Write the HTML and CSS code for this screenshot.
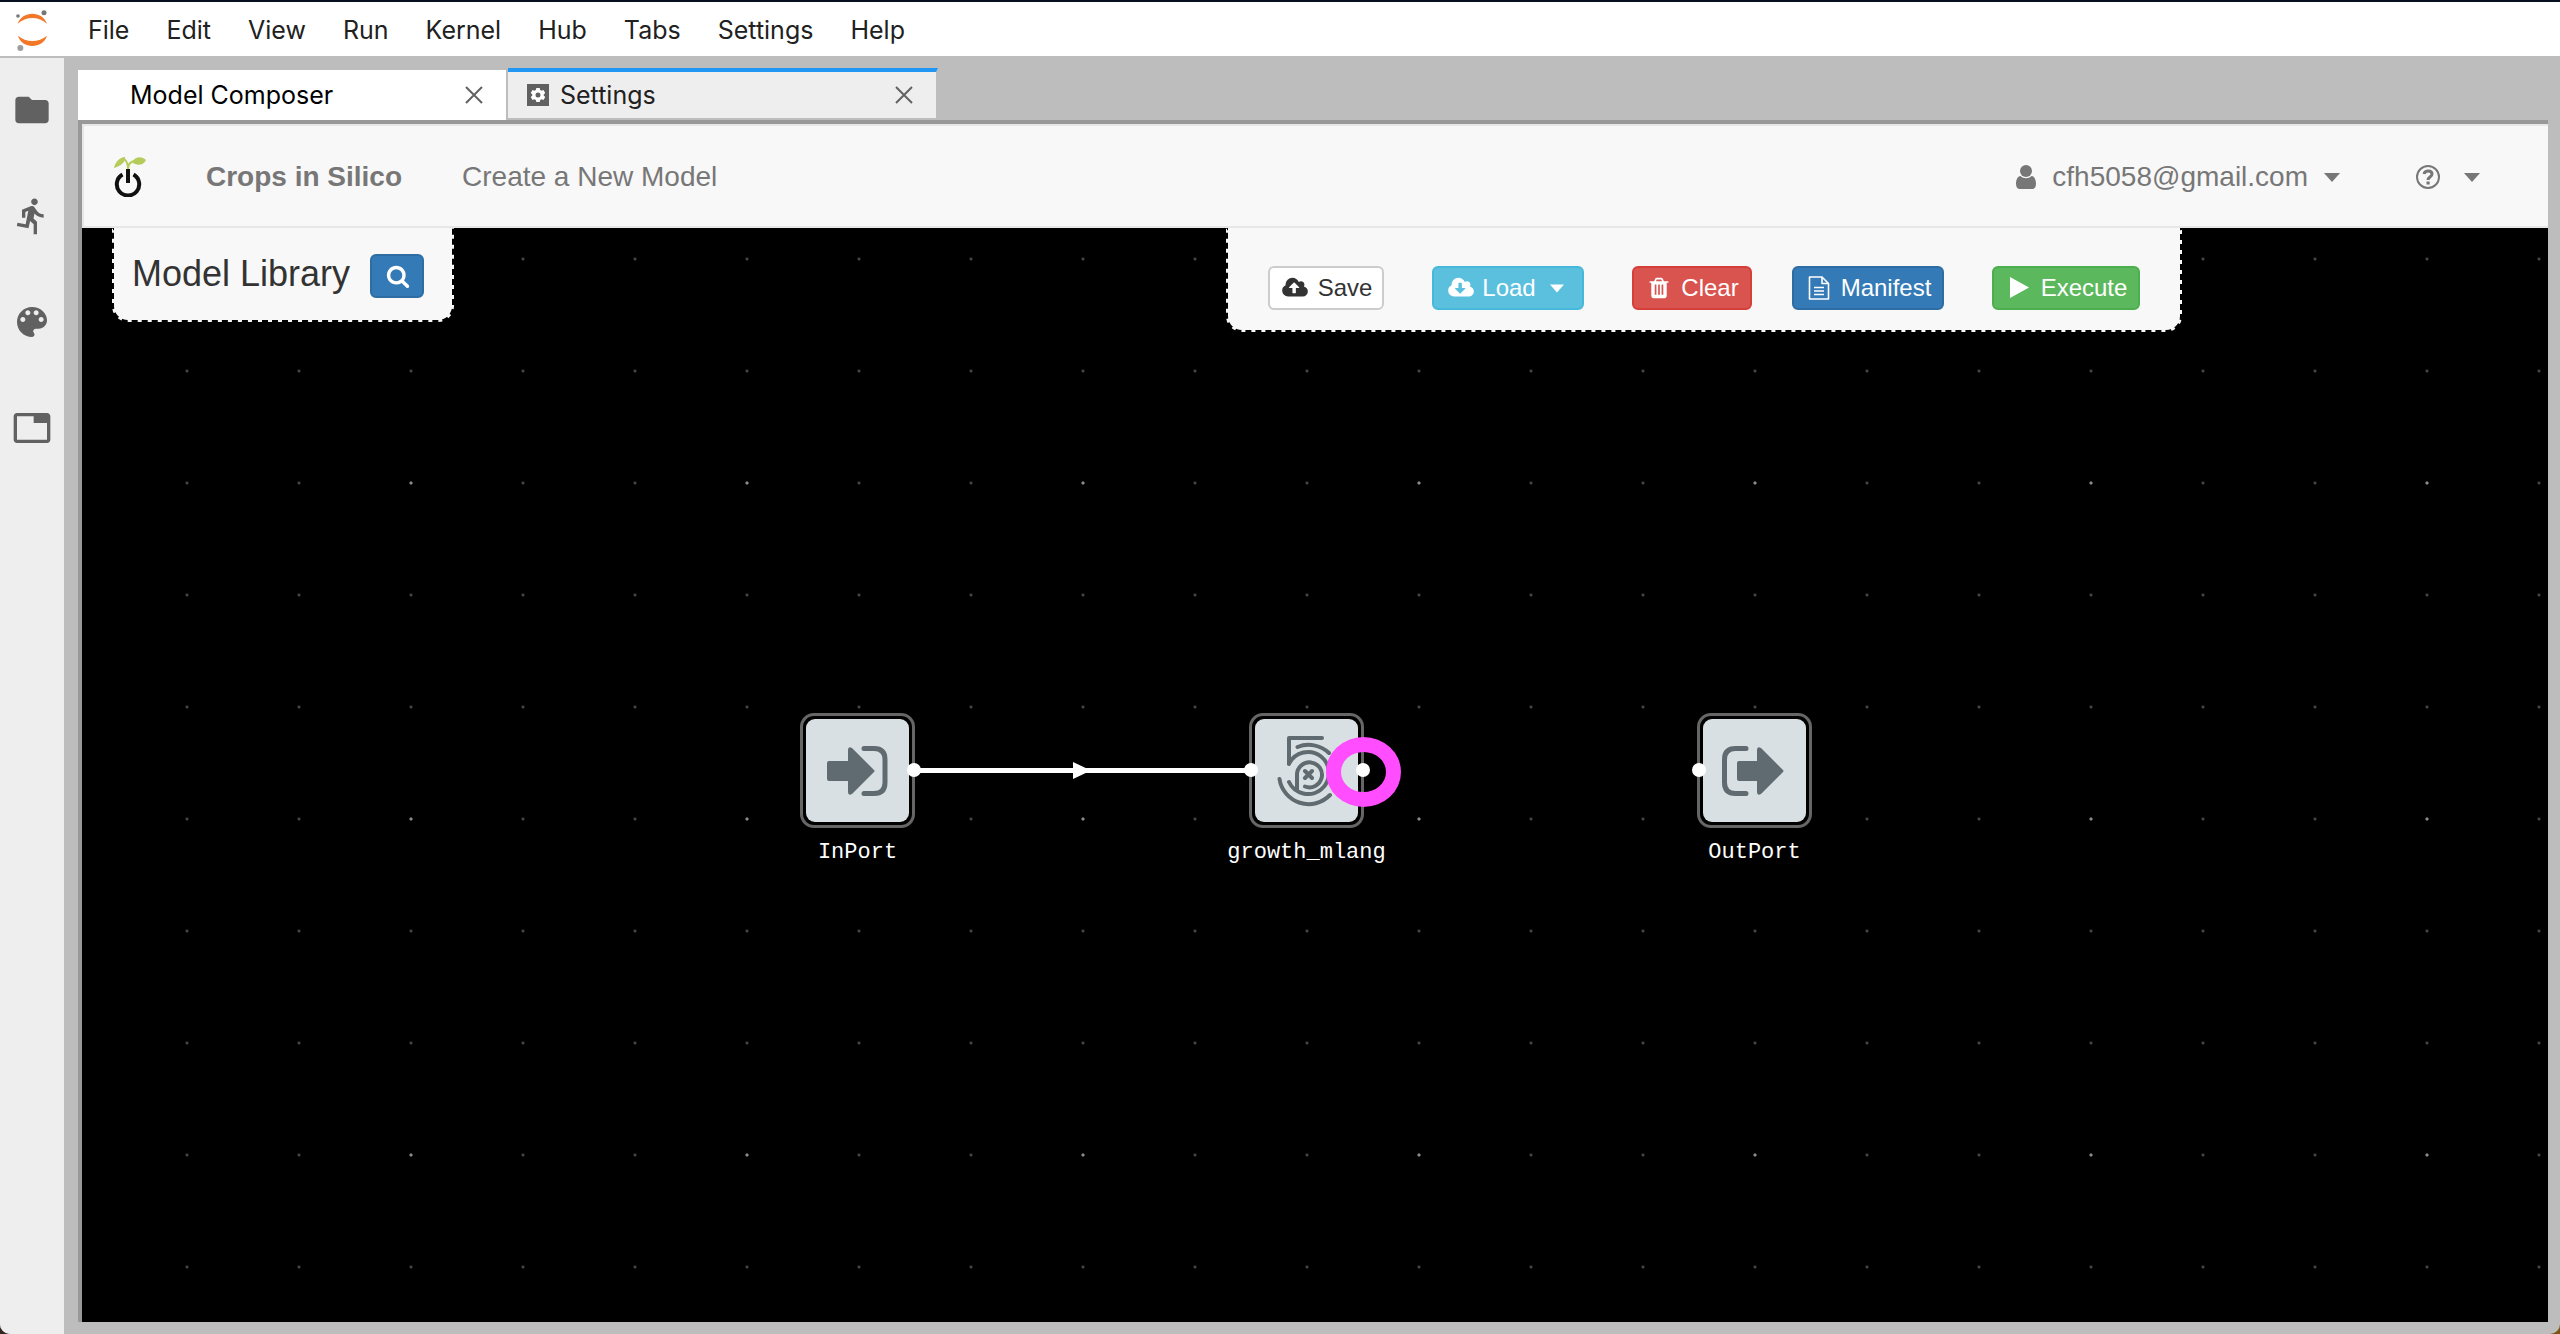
FILE: index.html
```html
<!DOCTYPE html>
<html lang="en">
<head>
<meta charset="utf-8">
<title>Model Composer</title>
<link rel="stylesheet" href="styles.css">
</head>
<body>
<div class="app">
  <header class="menubar">
    <svg class="jupyter" viewBox="0 0 192 162" aria-hidden="true">
      <path fill="#f37726" d="M53 65C66 25 128 25 141 65C116 42 78 42 53 65zM54 101C66 142 128 142 141 101C116 122 78 122 54 101z"/>
      <circle cx="54" cy="42" r="5.5" fill="#767677"/><circle cx="132" cy="32" r="7.5" fill="#767677"/><circle cx="61" cy="138" r="9" fill="#9e9e9e"/>
    </svg>
    <nav class="menus">
      <button>File</button><button>Edit</button><button>View</button><button>Run</button><button>Kernel</button><button>Hub</button><button>Tabs</button><button>Settings</button><button>Help</button>
    </nav>
  </header>
  <div class="workspace">
    <aside class="sidebar">
      <button aria-label="Files"><svg viewBox="0 0 24 24"><path d="M10 4H4c-1.100 0-1.990.9-1.990 2L2 18c0 1.100.9 2 2 2h16c1.100 0 2-.9 2-2V8c0-1.100-.9-2-2-2h-8l-2-2z"/></svg></button>
      <button aria-label="Running"><svg viewBox="0 0 24 24"><path d="M13.490 5.480c1.100 0 2-.9 2-2s-.9-2-2-2-2 .9-2 2 .9 2 2 2zm-3.600 13.900l1-4.400 2.100 2v6h2v-7.500l-2.100-2 .6-3c1.300 1.500 3.300 2.500 5.500 2.500v-2c-1.900 0-3.500-1-4.300-2.400l-1-1.600c-.4-.6-1-1-1.700-1-.3 0-.5.1-.8.1l-5.200 2.200v4.700h2v-3.400l1.800-.7-1.600 8.100-4.900-1-.4 2 7 1.400z"/></svg></button>
      <button aria-label="Commands"><svg viewBox="0 0 24 24"><path d="M12 3c-4.970 0-9 4.030-9 9s4.030 9 9 9c.83 0 1.500-.67 1.500-1.500 0-.39-.15-.74-.39-1.010-.23-.26-.38-.61-.38-.99 0-.83.67-1.500 1.500-1.500H16c2.760 0 5-2.240 5-5 0-4.420-4.030-8-9-8zm-5.500 9c-.83 0-1.500-.67-1.500-1.500S5.670 9 6.500 9 8 9.670 8 10.500 7.330 12 6.500 12zm3-4C8.670 8 8 7.330 8 6.500S8.670 5 9.500 5s1.500.67 1.500 1.500S10.330 8 9.500 8zm5 0c-.83 0-1.500-.67-1.500-1.500S13.670 5 14.500 5s1.500.67 1.500 1.500S15.330 8 14.500 8zm3 4c-.83 0-1.500-.67-1.500-1.500S16.670 9 17.500 9s1.500.67 1.500 1.500-.67 1.500-1.500 1.500z"/></svg></button>
      <button aria-label="Open tabs"><svg viewBox="0 0 24 24"><path d="M21 3H3c-1.100 0-2 .9-2 2v14c0 1.100.9 2 2 2h18c1.100 0 2-.9 2-2V5c0-1.100-.9-2-2-2zm0 16H3V5h10v4h8v10z"/></svg></button>
    </aside>
    <main class="dock">
      <div class="tabs">
        <div class="tab tab-front">
          <span class="tab-icon"></span><span class="tab-label">Model Composer</span>
          <button class="close" aria-label="Close Model Composer"><svg viewBox="0 0 18 18"><path d="M1 1l16 16M17 1L1 17"/></svg></button>
        </div>
        <div class="tab tab-current">
          <svg class="tab-icon" viewBox="0 0 24 24"><path fill="#616161" d="M1 1h22v22H1z"/><path fill="#fff" fill-rule="evenodd" d="M10.300 5h3.400l.5 2 1.300.7 2-.6 1.700 2.900-1.500 1.400v1.200l1.500 1.400-1.700 2.900-2-.6-1.300.7-.5 2h-3.400l-.5-2-1.300-.7-2 .6L4.800 14l1.500-1.400v-1.200L4.800 10l1.700-2.900 2 .6L9.800 7zM12 9.500a2.500 2.500 0 1 0 0 5 2.500 2.500 0 0 0 0-5z"/></svg>
          <span class="tab-label">Settings</span>
          <button class="close" aria-label="Close Settings"><svg viewBox="0 0 18 18"><path d="M1 1l16 16M17 1L1 17"/></svg></button>
        </div>
      </div>
      <section class="panel">
        <nav class="navbar">
          <a class="logo" href="#" aria-label="Home"><svg viewBox="0 0 32 40">
            <path fill="#b5cc5a" d="M0 11C1 5 6 0 11 0c1 5-4 9-11 11zM18 5c3-6 10-6 14-2-3 6-10 6-14 2z"/>
            <path fill="none" stroke="#b5cc5a" stroke-width="2" d="M10 2c3 2 4 5 4 10 0-4 2-7 6-8"/>
            <path fill="none" stroke="#111" stroke-width="4" d="M8.500 17.500a11.200 11.200 0 1 0 11 0M14 12v14"/>
          </svg></a>
          <a class="brand" href="#">Crops in Silico</a>
          <a class="link" href="#">Create a New Model</a>
          <button class="account">
            <svg class="user" viewBox="0 0 20 24"><circle cx="10" cy="6" r="6"/><path d="M4.500 11c3 3 8 3 11 0 3 0 4.500 4 4.500 8 0 3-1.500 5-4 5H4c-2.500 0-4-2-4-5 0-4 1.500-8 4.500-8z"/></svg>
            cfh5058@gmail.com
            <svg class="caret" viewBox="0 0 16 9"><path d="M0 0h16L8 9z"/></svg>
          </button>
          <button class="help" aria-label="Help">
            <svg class="question" viewBox="0 0 24 24"><circle cx="12" cy="12" r="11" fill="none" stroke="currentColor" stroke-width="2"/><path fill="none" stroke="currentColor" stroke-width="3" d="M8 9c1-4 8-4 8 0 0 3-4 3-4 6"/><path d="M10.500 16.500h3.200v3h-3.200z"/></svg>
            <svg class="caret" viewBox="0 0 16 9"><path d="M0 0h16L8 9z"/></svg>
          </button>
        </nav>
        <div class="canvas">
          <div class="library">
            <h3>Model Library</h3>
            <button class="btn primary search" aria-label="Search models"><svg class="icon" viewBox="0 0 1792 1792"><path d="M1216 832q0-185-131.500-316.500t-316.500-131.500-316.500 131.500-131.500 316.500 131.500 316.500 316.500 131.500 316.500-131.500 131.500-316.500zm512 832q0 52-38 90t-90 38q-54 0-90-38l-343-342q-179 124-399 124-143 0-273.500-55.500t-225-150-150-225-55.500-273.500 55.500-273.500 150-225 225-150 273.500-55.500 273.500 55.500 225 150 150 225 55.500 273.500q0 220-124 399l343 343q37 37 37 90z"/></svg></button>
          </div>
          <div class="toolbar">
            <button class="btn default save"><svg class="icon cloud" viewBox="-64 0 1920 1792"><path d="M1216 864q0-14-9-23l-352-352q-9-9-23-9t-23 9l-351 351q-10 12-10 24 0 14 9 23t23 9h224v352q0 13 9.500 22.500t22.500 9.500h192q13 0 22.500-9.500t9.500-22.500v-352h224q13 0 22.500-9.500t9.500-22.500zm640 288q0 159-112.500 271.500t-271.500 112.500h-1088q-185 0-316.500-131.500t-131.500-316.500q0-130 70-240t188-165q-2-30-2-43 0-212 150-362t362-150q156 0 285.500 87t188.500 231q71-62 166-62 106 0 181 75t75 181q0 76-41 138 130 31 213.500 135.500t83.500 238.500z"/></svg>Save</button>
            <button class="btn info load"><svg class="icon cloud" viewBox="-64 0 1920 1792"><path d="M1216 928q0-14-9-23t-23-9h-224v-352q0-13-9.500-22.500t-22.500-9.500h-192q-13 0-22.500 9.500t-9.500 22.500v352h-224q-13 0-22.500 9.500t-9.500 22.500q0 14 9 23l352 352q9 9 23 9t23-9l351-351q10-12 10-24zm640 224q0 159-112.500 271.500t-271.500 112.500h-1088q-185 0-316.500-131.500t-131.500-316.500q0-130 70-240t188-165q-2-30-2-43 0-212 150-362t362-150q156 0 285.500 87t188.500 231q71-62 166-62 106 0 181 75t75 181q0 76-41 138 130 31 213.500 135.500t83.500 238.500z"/></svg>Load<svg class="caret" viewBox="0 0 16 9"><path d="M0 0h16L8 9z"/></svg></button>
            <button class="btn danger clear"><svg class="icon" viewBox="0 0 1792 1792"><path d="M704 1376v-704q0-14-9-23t-23-9h-64q-14 0-23 9t-9 23v704q0 14 9 23t23 9h64q14 0 23-9t9-23zm256 0v-704q0-14-9-23t-23-9h-64q-14 0-23 9t-9 23v704q0 14 9 23t23 9h64q14 0 23-9t9-23zm256 0v-704q0-14-9-23t-23-9h-64q-14 0-23 9t-9 23v704q0 14 9 23t23 9h64q14 0 23-9t9-23zm-544-992h448l-48-117q-7-9-17-11h-317q-10 2-17 11zm928 32v64q0 14-9 23t-23 9h-96v948q0 83-47 143.500t-113 60.500h-832q-66 0-113-58.500t-47-141.500v-952h-96q-14 0-23-9t-9-23v-64q0-14 9-23t23-9h309l70-167q15-37 54-63t79-26h320q40 0 79 26t54 63l70 167h309q14 0 23 9t9 23z"/></svg>Clear</button>
            <button class="btn primary manifest"><svg class="icon" viewBox="0 0 24 24"><path fill="none" stroke="currentColor" stroke-width="1.600" stroke-linejoin="round" d="M2.500 1H15l6.500 6.500V23h-19zM15 1v6.500h6.500M7 11.500h10M7 15h10M7 18.500h10"/></svg>Manifest</button>
            <button class="btn success execute"><svg class="icon" viewBox="0 0 24 24"><path d="M3 1v21l19-10.500z"/></svg>Execute</button>
          </div>
          <svg class="wires" aria-hidden="true"><path d="M832 542.500h337" stroke="#fff" stroke-width="5"/><path d="M991 534v17l18-8.500z" fill="#fff"/></svg>
          <div class="node inport">
            <div class="box"><svg viewBox="6 6 103 103"><path d="M29 48h19V37q0-4 4-2l22 22q1 1 0 2L52 81q-4 2-4-2V68H29q-2 0-2-2V50q0-2 2-2z"/><path class="line" d="M64 35.500h10q11 0 11 11v23q0 11-11 11H64"/></svg></div>
            <span class="name">InPort</span><i class="port out"></i>
          </div>
          <div class="node growth">
            <div class="box"><svg viewBox="6 6 103 103"><path class="thin" d="M73 25H40v26M40 51A21 21 0 1 1 40 69M48 77V62a12.500 12.500 0 1 1 8 11.500M48.500 34A29.500 29.500 0 0 1 80 40M30.500 66A29.500 29.500 0 0 0 81 82M56 58l7 7M63 58l-7 7"/></svg></div>
            <span class="name">growth_mlang</span><i class="port in"></i><i class="ring"></i><i class="port out"></i>
          </div>
          <div class="node outport">
            <div class="box"><svg viewBox="6 6 103 103"><path d="M42 48h18V37q0-4 4-2l22 22q1 1 0 2L64 81q-4 2-4-2V68H42q-2 0-2-2V50q0-2 2-2z"/><path class="line" d="M49 35.500H38.500q-11 0-11 11v23q0 11 11 11H49"/></svg></div>
            <span class="name">OutPort</span><i class="port in"></i>
          </div>
        </div>
      </section>
    </main>
  </div>
</div>
</body>
</html>
```
FILE: styles.css
```css
* { box-sizing: border-box; }
body { margin: 0; background: linear-gradient(90deg, #33251f, #7a5414); }
button { border: 0; padding: 0; background: none; color: inherit; font: inherit; }
a { color: inherit; text-decoration: none; }
svg { display: block; flex: none; fill: currentColor; }

.app {
  display: flex;
  flex-direction: column;
  min-height: 100vh;
  overflow: hidden;
  border-top: 2px solid #06101f;
  border-radius: 0 0 10px 10px;
  background: #bdbdbd;
  font: 25px/32px Inter, "Liberation Sans", sans-serif;
  color: #212121;
}
.menubar { display: flex; height: 56px; background: #fff; border-bottom: 2px solid #bdbdbd; }
.jupyter { width: 64px; height: 54px; }
.menus { display: flex; gap: 1px; padding: 2px 0 0 6px; }
.menus button { padding: 0 18px; }

.workspace { flex: 1; display: flex; }
.sidebar { width: 64px; background: #eee; color: #616161; }
.sidebar button { display: flex; width: 64px; height: 106px; padding-bottom: 2px; align-items: center; justify-content: center; }
.sidebar svg { width: 40px; height: 40px; }

.dock { flex: 1; display: flex; flex-direction: column; padding: 10px 12px 12px 14px; }
.tabs { display: flex; height: 52px; align-items: flex-start; }
.tab { display: flex; align-items: center; width: 430px; padding: 0 23px 0 18px; border-right: 2px solid #bdbdbd; }
.tab-front { height: 50px; margin-top: 2px; background: #fff; color: #000; }
.tab-current { height: 50px; border-top: 4px solid #2196f3; background: #eee; }
.tab-icon { width: 24px; height: 24px; }
.tab-label { flex: 1; padding-left: 10px; }
.close svg { width: 18px; height: 18px; stroke: #616161; stroke-width: 2; }

.panel {
  flex: 1;
  display: flex;
  flex-direction: column;
  border-top: 4px solid #999;
  border-left: 4px solid #999;
  font-family: "Liberation Sans", Arial, sans-serif;
}
.navbar {
  display: flex;
  align-items: center;
  height: 104px;
  padding: 2px 68px 0 30px;
  border: 2px solid #e7e7e7;
  border-right: 0;
  background: #f8f8f8;
  color: #777;
  font-size: 28px;
}
.logo svg { width: 32px; height: 40px; }
.brand { margin-left: 60px; font-weight: bold; }
.link { margin-left: 60px; }
.account, .help { display: flex; align-items: center; }
.account { margin-left: auto; gap: 16px; }
.help { margin-left: 76px; gap: 24px; }
.user { width: 20px; height: 24px; }
.question { width: 24px; height: 24px; }
.caret { width: 16px; height: 9px; }

.canvas {
  flex: 1;
  position: relative;
  display: flex;
  align-items: flex-start;
  justify-content: space-between;
  padding: 0 366px 0 30px;
  background:
    radial-gradient(circle, #888 1px, transparent 2px) 161px 87px / 336px 336px,
    radial-gradient(circle, #444 1px, transparent 2px) 49px 87px / 112px 112px,
    #000;
}
.library, .toolbar {
  display: flex;
  align-items: center;
  border: 2px dashed #000;
  border-top: 0;
  border-radius: 0 0 16px 16px;
  background: #f8f8f8;
}
.library { height: 94px; gap: 20px; padding: 0 28px 0 18px; }
.library h3 { margin: 0; font-size: 36px; line-height: 40px; font-weight: normal; color: #333; }
.toolbar { height: 104px; padding: 18px 40px 0; gap: 48px; }
.btn {
  display: flex;
  align-items: center;
  justify-content: center;
  height: 44px;
  gap: 10px;
  padding-left: 2px;
  border: 2px solid;
  border-radius: 6px;
  font-size: 24px;
  color: #fff;
}
.icon { width: 24px; height: 24px; }
.cloud { width: 26px; }
.default { background: #fff; border-color: #ccc; color: #333; }
.primary { background: #337ab7; border-color: #2e6da4; }
.info { background: #5bc0de; border-color: #46b8da; }
.danger { background: #d9534f; border-color: #d43f3a; }
.success { background: #5cb85c; border-color: #4cae4c; }
.search { width: 54px; margin-top: 4px; }
.save { width: 116px; }
.load { width: 152px; gap: 8px; padding: 0 4px 0 0; }
.load .caret { margin-left: 6px; width: 14px; }
.clear { width: 120px; }
.manifest { width: 152px; margin-left: -8px; }
.execute { width: 148px; }

.wires { position: absolute; inset: 0; width: 100%; height: 100%; pointer-events: none; }
.node { position: absolute; top: 485px; width: 115px; }
.inport { left: 718px; }
.growth { left: 1167px; }
.outport { left: 1615px; }
.box {
  height: 115px;
  padding: 3px;
  border: 3px solid #666;
  border-radius: 14px;
  background: #000;
  color: #5f6b70;
}
.box svg { width: 103px; height: 103px; overflow: hidden; border-radius: 9px; background: #d9e0e3; }
.line, .thin { fill: none; stroke: currentColor; stroke-linecap: round; stroke-linejoin: round; }
.line { stroke-width: 5; }
.thin { stroke-width: 4; }
.name {
  display: flex;
  justify-content: center;
  margin-top: 9px;
  font: 22px/32px "Liberation Mono", monospace;
  color: #fff;
}
.port { position: absolute; top: 50px; width: 14px; height: 14px; border-radius: 50%; background: #fff; }
.port.in { left: -5px; }
.port.out { right: -6px; }
.ring { position: absolute; left: 77px; top: 24px; width: 75px; height: 70px; border: 15px solid #ff4dff; border-radius: 50%; }
```
